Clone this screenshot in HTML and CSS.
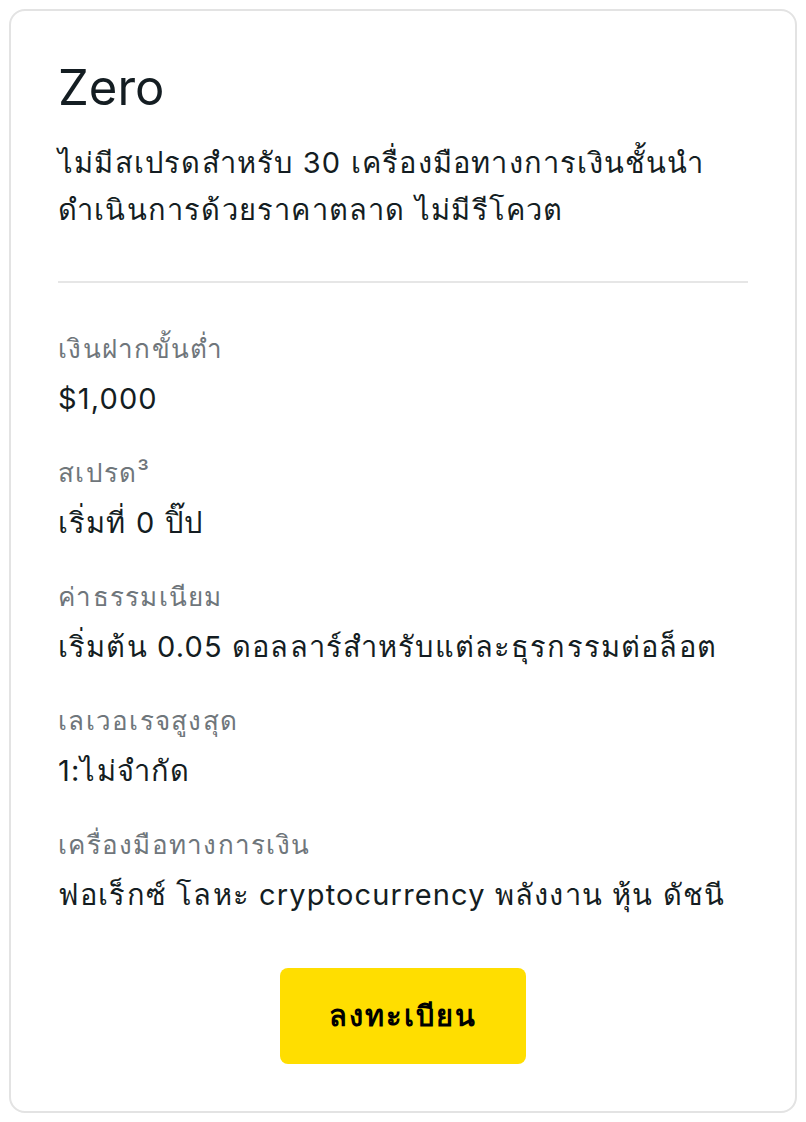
FILE: index.html
```html
<!DOCTYPE html>
<html lang="th">
<head>
  <meta charset="UTF-8" />
  <meta name="viewport" content="width=device-width, initial-scale=1.0"/>
  <title>Zero</title>
  <link rel="stylesheet" href="styles.css">
</head>
<body>

<div class="card">
  <h2 class="title">Zero</h2>
  <p class="subtitle">ไม่มีสเปรดสำหรับ 30 เครื่องมือทางการเงินชั้นนำ<br>ดำเนินการด้วยราคาตลาด ไม่มีรีโควต</p>

  <div class="details">
    <div class="item">
      <div class="label">เงินฝากขั้นต่ำ</div>
      <div class="value">$1,000</div>
    </div>
    <div class="item">
      <div class="label">สเปรด³</div>
      <div class="value">เริ่มที่ 0 ปิ๊ป</div>
    </div>
    <div class="item">
      <div class="label">ค่าธรรมเนียม</div>
      <div class="value">เริ่มต้น 0.05 ดอลลาร์สำหรับแต่ละธุรกรรมต่อล็อต</div>
    </div>
    <div class="item">
      <div class="label">เลเวอเรจสูงสุด</div>
      <div class="value">1:ไม่จำกัด</div>
    </div>
    <div class="item">
      <div class="label">เครื่องมือทางการเงิน</div>
      <div class="value">ฟอเร็กซ์ โลหะ cryptocurrency พลังงาน หุ้น ดัชนี</div>
    </div>
  </div>

  <div class="actions">
    <button class="btn">ลงทะเบียน</button>
  </div>
</div>

</body>
</html>
```

FILE: styles.css
```css
body {
  font-family: Inter, "Noto Sans", sans-serif;
  margin: 9px;
  background-color: #ffffff;
  color: #141d22;
}
.card {
  box-sizing: border-box;
  height: 1104px;
  border: 2px solid #e3e3e3;
  border-radius: 16px;
  padding: 48px 47px 47px 47px;
}
.title {
  font-size: 49px;
  font-weight: 400;
  line-height: 58px;
  margin: 0 0 22px;
}
.subtitle {
  font-size: 29px;
  line-height: 47px;
  letter-spacing: 1.2px;
  margin: 0;
  padding-bottom: 48px;
  border-bottom: 2px solid #e6e6e6;
}
.details {
  padding-top: 41px;
}
.item {
  margin-bottom: 24px;
}
.label {
  font-size: 26px;
  line-height: 50px;
  letter-spacing: 1.25px;
  color: #6f767b;
}
.value {
  font-size: 29px;
  line-height: 50px;
  letter-spacing: 1.15px;
}
.actions {
  display: flex;
  justify-content: center;
  padding-top: 24px;
}
.btn {
  width: 246px;
  height: 96px;
  background-color: #ffde00;
  border: none;
  border-radius: 8px;
  font-family: inherit;
  font-size: 29px;
  font-weight: 700;
  letter-spacing: 2px;
  color: #000;
  cursor: pointer;
}
```
